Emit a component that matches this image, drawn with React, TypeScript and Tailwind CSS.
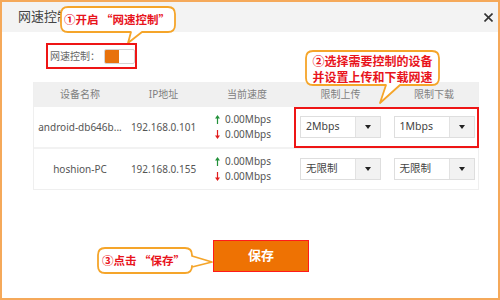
import React from "react";

const FONT = "font-['Noto_Sans','Noto_Sans_CJK_SC',sans-serif]";
const CJK = "font-['Noto_Sans_CJK_SC',sans-serif]";

interface Device {
  name: string;
  ip: string;
  up: string;
  down: string;
  limitUp: string;
  limitDown: string;
}

const DEVICES: Device[] = [
  {
    name: "android-db646b...",
    ip: "192.168.0.101",
    up: "0.00Mbps",
    down: "0.00Mbps",
    limitUp: "2Mbps",
    limitDown: "1Mbps",
  },
  {
    name: "hoshion-PC",
    ip: "192.168.0.155",
    up: "0.00Mbps",
    down: "0.00Mbps",
    limitUp: "无限制",
    limitDown: "无限制",
  },
];

const COLS = "grid grid-cols-[92px_75px_92px_95px_92px]";

function Arrow({ up }: { up: boolean }) {
  const color = up ? "#23913a" : "#e11d1d";
  return (
    <svg width="5" height="9" viewBox="0 0 5 9" className="shrink-0">
      {up ? (
        <>
          <path d="M2.5 0 L5 3.5 H0 Z" fill={color} />
          <rect x="1.9" y="3" width="1.2" height="6" fill={color} />
        </>
      ) : (
        <>
          <rect x="1.9" y="0" width="1.2" height="6" fill={color} />
          <path d="M2.5 9 L5 5.5 H0 Z" fill={color} />
        </>
      )}
    </svg>
  );
}

function Select({ value }: { value: string }) {
  return (
    <div className="flex h-[22px] w-[81px] border border-[#dedede] bg-white">
      <div className="flex-1 flex items-center pl-[5px] text-[10.5px] text-[#444]">
        {value}
      </div>
      <div className="w-[25px] flex items-center justify-center bg-[#f2f2f2] border-l border-[#e2e2e2]">
        <svg width="6" height="4" viewBox="0 0 6 4">
          <path d="M0 0 H6 L3 4 Z" fill="#222" />
        </svg>
      </div>
    </div>
  );
}

function Callouts() {
  return (
    <div
      lang="zh-CN"
      className={`absolute -left-[2px] -top-[2px] w-[500px] h-[300px] pointer-events-none ${CJK}`}
    >
      <svg width="500" height="300" className="absolute left-0 top-0">
        <g fill="#fff" stroke="#f5a52a" strokeWidth="1.8" strokeLinejoin="round">
          <path d="M68 7 H168 Q175 7 175 14 V25 Q175 32 168 32 H142 L128 43 L131 32 H68 Q61 32 61 25 V14 Q61 7 68 7 Z" />
          <path d="M313 51 H432 Q439 51 439 58 V78 Q439 85 432 85 H400 L380 103 L386 85 H313 Q306 85 306 78 V58 Q306 51 313 51 Z" />
          <path d="M105 248 H185 Q192 248 192 255 V256 L212 262 L192 267 V266 Q192 273 185 273 H105 Q98 273 98 266 V255 Q98 248 105 248 Z" />
        </g>
      </svg>

      <div className="absolute left-[61px] top-[7px] w-[114px] h-[25px] flex items-center pl-[3px] text-[11.5px] font-bold text-[#e8141c] whitespace-nowrap">
        ①开启 “网速控制”
      </div>
      <div className="absolute left-[306px] top-[52px] w-[133px] h-[33px] flex flex-col justify-center items-center text-[12px] leading-[16px] font-bold text-[#e8141c]">
        <span>②选择需要控制的设备</span>
        <span>并设置上传和下载网速</span>
      </div>
      <div className="absolute left-[98px] top-[248px] w-[94px] h-[25px] flex items-center pl-[4px] text-[11.5px] font-bold text-[#e8141c] whitespace-nowrap">
        ③点击 “保存”
      </div>

      <div className="absolute left-[46px] top-[43px] w-[91px] h-[26px] border-2 border-[#ee1515]" />
      <div className="absolute left-[294px] top-[107px] w-[185px] h-[41px] border-2 border-[#ee1515]" />
    </div>
  );
}

export default function App() {
  return (
    <div
      className={`relative w-[500px] h-[300px] overflow-hidden bg-white border-2 border-[#f5a95a] ${FONT}`}
    >
      <div className="h-[30px] bg-[#f3f3f3] flex items-center justify-between pl-[16px] pr-[5px]">
        <span className="text-[13px] text-[#444]">网速控制</span>
        <svg width="9" height="9" viewBox="0 0 9 9">
          <path d="M0.5 0.5 L8.5 8.5 M8.5 0.5 L0.5 8.5" stroke="#333" strokeWidth="1.6" />
        </svg>
      </div>

      <div className="mt-[17px] ml-[48px] flex items-center gap-[4px] h-[15px]">
        <span className="text-[10px] text-[#666]">网速控制：</span>
        <div className="flex w-[31px] h-[15px] border border-[#d4d4d4] rounded-[2px] overflow-hidden bg-white">
          <div className="w-[14px] bg-[#e8720c]" />
        </div>
      </div>

      <div className="mt-[18px] ml-[31px] w-[446px] border-x border-b border-[#efefef]">
        <div className={`${COLS} h-[25px] bg-[#f0f0f0] text-[10px] text-[#808080] items-center text-center`}>
          <span>设备名称</span>
          <span>IP地址</span>
          <span>当前速度</span>
          <span>限制上传</span>
          <span>限制下载</span>
        </div>
        {DEVICES.map((d, i) => (
          <div
            key={d.ip}
            className={`${COLS} ${i === 0 ? "h-[42px] border-b-2 border-[#f2f2f2]" : "h-[40px]"} items-center text-[10px] text-[#555]`}
          >
            <span className="text-center truncate">{d.name}</span>
            <span className="text-center">{d.ip}</span>
            <div className="pl-[14px] flex flex-col leading-[15px]">
              <div className="flex items-center gap-[5px]">
                <Arrow up />
                <span>{d.up}</span>
              </div>
              <div className="flex items-center gap-[5px]">
                <Arrow up={false} />
                <span>{d.down}</span>
              </div>
            </div>
            <div className="flex justify-center">
              <Select value={d.limitUp} />
            </div>
            <div className="flex justify-center">
              <Select value={d.limitDown} />
            </div>
          </div>
        ))}
      </div>

      <button className="mt-[50px] ml-[211px] w-[96px] h-[32px] bg-[#ee7203] border border-[#ff1a1a] text-white text-[13px] font-bold flex items-center justify-center">
        保存
      </button>

      <Callouts />
    </div>
  );
}
